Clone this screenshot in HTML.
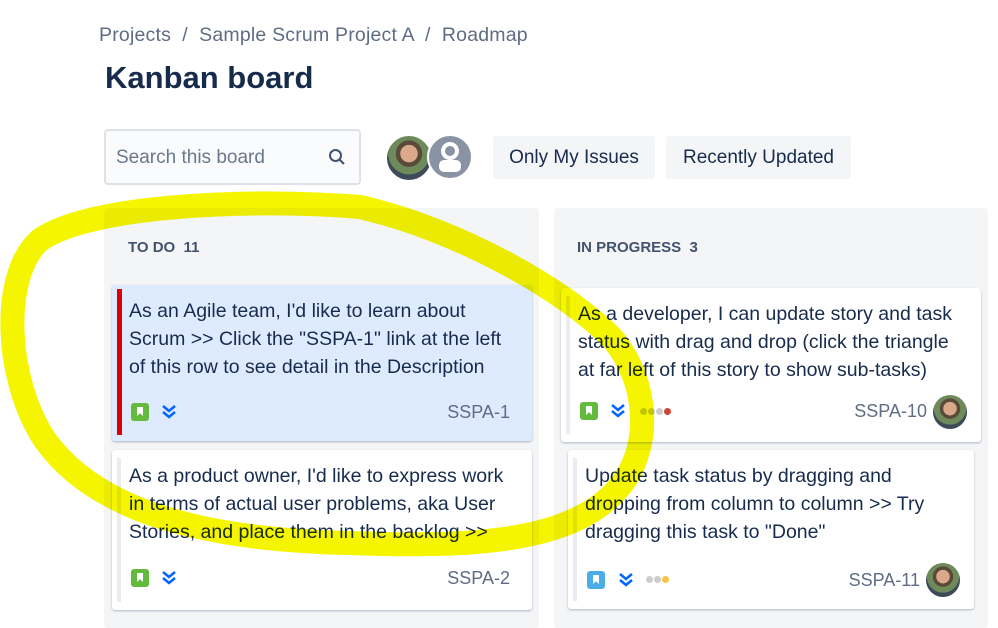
<!DOCTYPE html><html><head><style>
body{margin:0;width:998px;height:617px;overflow:hidden;background:#fff;font-family:"Liberation Sans",sans-serif;color:#172b4d;position:relative}
.a{position:absolute}
.crumb{left:99px;top:24px;font-size:19.5px;color:#5e6c84;letter-spacing:.2px}
.title{left:105px;top:60px;font-size:31px;font-weight:bold}
.search{left:104px;top:129px;width:253px;height:52px;border:2px solid #dfe1e6;border-radius:4px;background:#fafbfc}
.search span{position:absolute;left:10px;top:16px;font-size:19px;color:#6b778c}
.btn{top:136px;height:43px;background:#f4f5f7;border-radius:3px;font-size:19px;line-height:43px;text-align:center;color:#172b4d}
.col{background:#f4f5f7;border-radius:4px}
.ch{font-size:15px;color:#42526e;font-weight:bold}
.card{background:#fff;border-radius:3px;box-shadow:0 1px 2px rgba(9,30,66,.3)}
.txt{position:absolute;left:17px;top:12px;font-size:19.5px;line-height:28px;color:#172b4d;white-space:nowrap}
.bar{position:absolute;left:5px;top:8px;bottom:8px;width:4px;background:#ebecf0}
.key{position:absolute;font-size:18px;color:#5e6c84}
.story{position:absolute;width:18px;height:18px;background:#63ba3c;border-radius:3px}
.story:after{content:"";position:absolute;left:6px;top:4px;width:6px;height:9px;background:#fff;clip-path:polygon(0 0,100% 0,100% 100%,50% 70%,0 100%)}
.pri{position:absolute;width:18px;height:18px}
.av{position:absolute;width:34px;height:34px;border-radius:50%;background:radial-gradient(circle at 50% 40%,#d9a98a 0 25%,#5a4a3a 26% 38%,#6f8a5a 39% 60%,#3d4a5a 61%)}
.dot{position:absolute;width:7px;height:7px;border-radius:50%}
</style></head><body>
<div class="a crumb">Projects &nbsp;/ &nbsp;Sample Scrum Project A &nbsp;/ &nbsp;Roadmap</div>
<div class="a title">Kanban board</div>
<div class="a search"><span>Search this board</span>
<svg class="a" style="left:222px;top:17px" width="18" height="18" viewBox="0 0 18 18"><circle cx="7.5" cy="7.5" r="5.5" fill="none" stroke="#42526e" stroke-width="2"/><line x1="11.5" y1="11.5" x2="16" y2="16" stroke="#42526e" stroke-width="2"/></svg></div>
<div class="av" style="left:385px;width:44px;height:44px;border:2px solid #fff;top:134px"></div>
<svg class="a" style="left:427px;top:134px" width="46" height="46" viewBox="0 0 46 46"><circle cx="23" cy="23" r="22" fill="#8993a4" stroke="#fff" stroke-width="2"/><circle cx="23" cy="17" r="7" fill="none" stroke="#fff" stroke-width="4"/><rect x="12" y="26" width="22" height="12" rx="5" fill="#fff"/></svg>
<div class="a btn" style="left:493px;width:162px">Only My Issues</div>
<div class="a btn" style="left:666px;width:185px">Recently Updated</div>

<div class="a col" style="left:104px;top:208px;width:435px;height:420px"></div>
<div class="a col" style="left:554px;top:208px;width:434px;height:420px"></div>
<div class="a ch" style="left:128px;top:239px">TO DO&nbsp; 11</div>
<div class="a ch" style="left:577px;top:239px">IN PROGRESS&nbsp; 3</div>

<div class="a card" style="left:112px;top:285px;width:420px;height:156px;background:#deebff">
<div class="bar" style="background:#d00;width:5px;top:4px;bottom:6px"></div>
<div class="txt">As an Agile team, I'd like to learn about<br>Scrum &gt;&gt; Click the "SSPA-1" link at the left<br>of this row to see detail in the Description</div>
<div class="story" style="left:19px;top:118px"></div>
<svg class="pri" style="left:48px;top:118px" viewBox="0 0 18 18"><path d="M3 3l6 5 6-5M3 9l6 5 6-5" fill="none" stroke="#0065ff" stroke-width="2.5"/></svg>
<div class="key" style="right:22px;top:117px">SSPA-1</div></div>

<div class="a card" style="left:112px;top:450px;width:420px;height:160px">
<div class="bar"></div>
<div class="txt">As a product owner, I'd like to express work<br>in terms of actual user problems, aka User<br>Stories, and place them in the backlog &gt;&gt;</div>
<div class="story" style="left:19px;top:119px"></div>
<svg class="pri" style="left:48px;top:119px" viewBox="0 0 18 18"><path d="M3 3l6 5 6-5M3 9l6 5 6-5" fill="none" stroke="#0065ff" stroke-width="2.5"/></svg>
<div class="key" style="right:22px;top:118px">SSPA-2</div></div>

<div class="a card" style="left:561px;top:288px;width:420px;height:154px">
<div class="bar"></div>
<div class="txt">As a developer, I can update story and task<br>status with drag and drop (click the triangle<br>at far left of this story to show sub-tasks)</div>
<div class="story" style="left:19px;top:114px"></div>
<svg class="pri" style="left:48px;top:114px" viewBox="0 0 18 18"><path d="M3 3l6 5 6-5M3 9l6 5 6-5" fill="none" stroke="#0065ff" stroke-width="2.5"/></svg>
<div class="dot" style="left:79px;top:120px;background:#ccc"></div><div class="dot" style="left:87px;top:120px;background:#ccc"></div><div class="dot" style="left:95px;top:120px;background:#ccc"></div><div class="dot" style="left:103px;top:120px;background:#d04437"></div>
<div class="key" style="right:54px;top:113px">SSPA-10</div>
<div class="av" style="right:14px;top:107px"></div></div>

<div class="a card" style="left:568px;top:450px;width:406px;height:159px">
<div class="bar"></div>
<div class="txt">Update task status by dragging and<br>dropping from column to column &gt;&gt; Try<br>dragging this task to "Done"</div>
<div class="story" style="left:19px;top:121px;background:#4bade8"></div>
<svg class="pri" style="left:49px;top:121px" viewBox="0 0 18 18"><path d="M3 3l6 5 6-5M3 9l6 5 6-5" fill="none" stroke="#0065ff" stroke-width="2.5"/></svg>
<div class="dot" style="left:78px;top:126px;background:#ccc"></div><div class="dot" style="left:86px;top:126px;background:#ccc"></div><div class="dot" style="left:94px;top:126px;background:#f6c342"></div>
<div class="key" style="right:54px;top:120px">SSPA-11</div>
<div class="av" style="right:14px;top:113px"></div></div>

<svg class="a" style="left:0;top:0;mix-blend-mode:multiply" width="998" height="617"><path d="M360 207 C250 198,90 205,40 240 C0 275,5 380,45 440 C95 510,200 540,350 543 C480 548,570 540,615 492 C655 450,648 380,612 338 C565 290,460 230,360 207 Z" fill="none" stroke="#f5f500" stroke-width="24"/></svg>
</body></html>
